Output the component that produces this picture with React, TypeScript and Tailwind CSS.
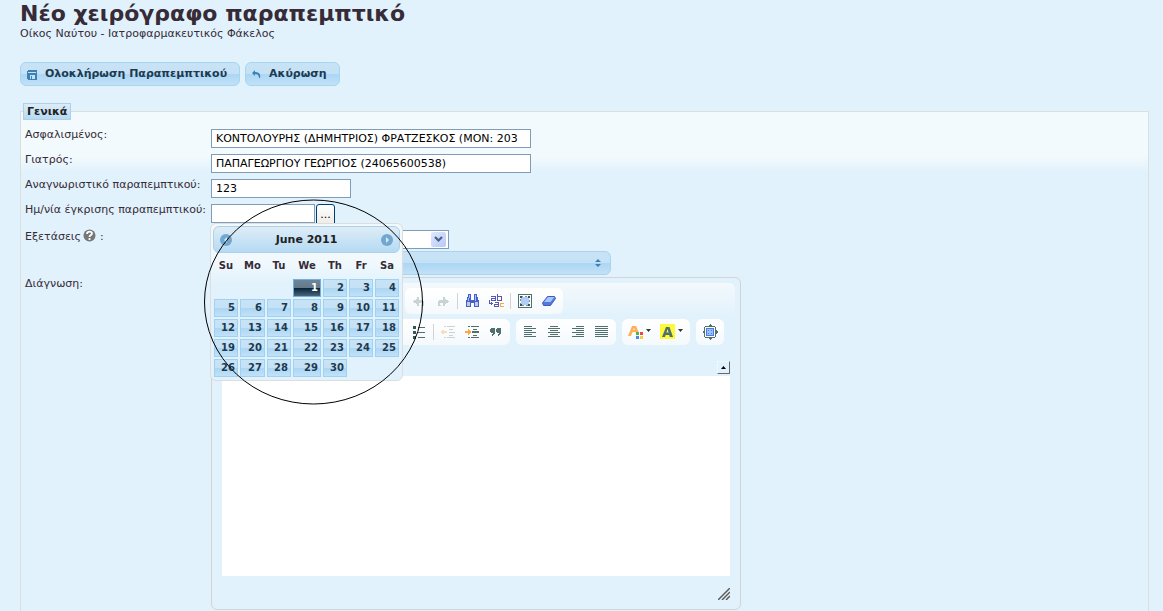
import React from 'react';

type ToolProps = { label: string; children: React.ReactNode; wide?: boolean };

const weekDays = ['Su', 'Mo', 'Tu', 'We', 'Th', 'Fr', 'Sa'];
const weeks = [
  [0, 0, 0, 1, 2, 3, 4],
  [5, 6, 7, 8, 9, 10, 11],
  [12, 13, 14, 15, 16, 17, 18],
  [19, 20, 21, 22, 23, 24, 25],
  [26, 27, 28, 29, 30, 0, 0],
];

const glossyFill = 'bg-[linear-gradient(to_bottom,#c8e3f6_0%,#c5e1f5_50%,#abd6f4_51%,#c2e1f7_100%)]';
const button = `flex h-6 items-center rounded-md border border-[#a6d5f3] font-bold text-[#1d3a50] ${glossyFill}`;
const field = 'h-[19px] border border-[#7f9db9] bg-white px-1 text-[11px] text-black outline-none';

function Tool({ label, children, wide }: ToolProps) {
  return (
    <button type="button" aria-label={label} className={wide ? 'flex h-6 w-8 items-center justify-center' : 'flex h-6 w-6 items-center justify-center'}>
      {children}
    </button>
  );
}

function Separator() {
  return <span className="mx-0.5 h-4 w-px bg-[#d3d3d3]" />;
}

function ToolGroup({ children, className = '' }: { children?: React.ReactNode; className?: string }) {
  return (
    <div className={`flex h-[26px] shrink-0 items-center rounded-md bg-linear-to-b from-white to-[#f4f9fc] px-0.5 ${className}`}>
      {children}
    </div>
  );
}

function Icon({ children, size = 16 }: { children: React.ReactNode; size?: number }) {
  return (
    <svg width={size} height={size} viewBox={`0 0 ${size} ${size}`} fill="none" shapeRendering="crispEdges" aria-hidden="true">
      {children}
    </svg>
  );
}

function AlignIcon({ rows }: { rows: [number, number][] }) {
  return (
    <Icon>
      {rows.map(([x, w], i) => (
        <rect key={i} x={x} y={2 + i * 2} width={w} height="1" fill="#4f706d" />
      ))}
    </Icon>
  );
}

function Calendar() {
  return (
    <div className="absolute top-[19px] -left-px z-10 w-[193px] rounded-md border border-[#dddddd] bg-[linear-gradient(to_bottom,#f2f9fd_0,#f2f9fd_36px,#e1f2fc_60px)] p-0.5">
      <div className="flex h-[27px] items-center justify-between rounded-md border border-[#aed0ea] bg-linear-to-b from-[#deedf7] to-[#b5daf3] px-[5px]">
        <button type="button" aria-label="Prev">
          <Icon size={14}>
            <circle cx="7" cy="7" r="6" fill="#72a7cf" shapeRendering="auto" />
            <path d="M8 4v6L5 7z" fill="#d8ebf8" shapeRendering="auto" />
          </Icon>
        </button>
        <span className="pt-0.5 text-[11px] font-bold text-[#222222]">June 2011</span>
        <button type="button" aria-label="Next">
          <Icon size={14}>
            <circle cx="7" cy="7" r="6" fill="#72a7cf" shapeRendering="auto" />
            <path d="M6 4v6l3-3z" fill="#d8ebf8" shapeRendering="auto" />
          </Icon>
        </button>
      </div>
      <table className="w-full table-fixed border-separate border-spacing-0 text-[10px] font-bold">
        <colgroup>
          <col className="w-[26px]" />
          <col className="w-[27px]" />
          <col className="w-[26px]" />
          <col className="w-[30px]" />
          <col className="w-[26px]" />
          <col className="w-[26px]" />
          <col className="w-[26px]" />
        </colgroup>
        <thead>
          <tr className="h-[25px] text-[#362b36]">
            {weekDays.map((day) => (
              <th key={day} className="p-0 text-center">{day}</th>
            ))}
          </tr>
        </thead>
        <tbody>
          {weeks.map((week, i) => (
            <tr key={i}>
              {week.map((day, j) => (
                <td key={j} className="h-5 p-px">
                  {day > 0 && (
                    <a
                      href="#"
                      className={
                        day === 1
                          ? 'block h-[18px] border border-[#6fb0dd] bg-[linear-gradient(to_bottom,#6d8597_0%,#627a8c_48%,#05233a_50%,#4a6478_100%)] pr-0.5 text-right leading-4 text-white'
                          : `block h-[18px] border border-[#9fd1f2] pr-0.5 text-right leading-4 text-[#1d3a50] ${glossyFill}`
                      }
                    >
                      {day}
                    </a>
                  )}
                </td>
              ))}
            </tr>
          ))}
        </tbody>
      </table>
    </div>
  );
}

function Editor() {
  return (
    <div className="w-[530px] rounded-md border border-[#d3d3d3] p-[5px]">
      <div className="flex h-[86px] flex-col gap-[5px] rounded-md bg-[linear-gradient(to_bottom,#f4f9fc_0,#e1f2fc_34px)] pt-[5px]">
        <div className="flex gap-1.5">
          <ToolGroup className="w-[182px]" />
          <ToolGroup>
            <Tool label="Undo">
              <Icon>
                <path d="M2 8h1v1H2zM3 7h2v3H3zM5 6h2v5H5zM6 4h2v9H6zM8 7h4v3H8zM11 8h2v5h-2zM10 12h2v1h-2z" fill="#c9d3d4" />
              </Icon>
            </Tool>
            <Tool label="Redo">
              <Icon>
                <path d="M14 8h-1v1h1zM11 7h2v3h-2zM9 6h2v5H9zM8 4h2v9H8zM4 7h4v3H4zM3 8h2v5H3zM4 12h2v1H4z" fill="#c9d3d4" />
              </Icon>
            </Tool>
            <Separator />
            <Tool label="Find">
              <Icon>
                <path d="M4 1h3v4H4zM10 1h3v4h-3zM3 4h4v3H3zM10 4h4v3h-4zM2 7h5v7H2zM10 7h5v7h-5zM7 7h3v3H7z" fill="#4560c8" />
                <path d="M5 2h1v3H5zM11 2h1v3h-1zM4 5h1v3H4zM11 5h1v3h-1z" fill="#9cc4ff" />
                <path d="M3 9h3v4H3zM11 9h3v4h-3z" fill="#c3cbd8" />
              </Icon>
            </Tool>
            <Tool label="Replace">
              <Icon>
                <path d="M3 3.500h4v4H3.500v-2H7M9.500 1v6.500H13v-4H9.500" stroke="#5756b5" />
                <path d="M1 6.500v3.500h3M6.500 9.500h4v4h-4v-2h4" stroke="#5756b5" />
                <path d="M3 8v5l2-2.500z" fill="#5756b5" />
                <path d="M16 10h-4v3.500h4" stroke="#ffa63f" />
              </Icon>
            </Tool>
            <Separator />
            <Tool label="Select all">
              <Icon>
                <path d="M1.500 1.500h13v13h-13z" stroke="#4f706d" fill="white" />
                <path d="M4 4h8v8H4z" fill="#b3cdf5" />
                <path d="M3.500 3.500h9v9h-9z" stroke="#7891a5" strokeDasharray="2 2" />
                <path d="M3 3h2v2H3zM11 3h2v2h-2zM3 11h2v2H3zM11 11h2v2h-2z" fill="#375653" />
              </Icon>
            </Tool>
            <Tool label="Remove format">
              <svg width="16" height="16" viewBox="0 0 16 16" aria-hidden="true">
                <path d="M6.500 3.500h7l1 2-5 7H2.500l-1-2.500z" fill="#4f7be0" stroke="#4a57b8" />
                <path d="M7 4h6.500L9.500 9H3z" fill="#a6c6ff" />
              </svg>
            </Tool>
          </ToolGroup>
        </div>
        <div className="flex gap-1.5">
          <ToolGroup className="w-[293px] justify-end">
            <Tool label="Bulleted list">
              <Icon><path d="M2 2h3v3H2zM2 7h3v3H2zM2 12h3v3H2z" fill="#375653" /><path d="M7 3.500h7M7 8.500h7M7 13.500h7" stroke="#4f706d" /></Icon>
            </Tool>
            <Separator />
            <Tool label="Decrease indent">
              <Icon>
                <path d="M4 2h2v1H4zM7 2h8v1H7zM9 5h4v1H9zM9 8h6v1H9zM9 11h4v1H9zM4 13h2v1H4zM7 13h8v1H7z" fill="#c9d3d4" />
                <path d="M1 7h1v2H1zM2 6h2v4H2zM4 7h3v2H4z" fill="#fbdcb8" />
              </Icon>
            </Tool>
            <Tool label="Increase indent">
              <Icon>
                <path d="M4 2h2v1H4zM7 2h8v1H7zM9 5h4v1H9zM8 7h7v2H8zM9 11h4v1H9zM4 13h2v1H4zM7 13h8v1H7z" fill="#4f706d" />
                <path d="M1 7h4v2H1zM4 5h1v6H4zM5 6h1v4H5zM6 7h1v2H6z" fill="#ffa63f" />
              </Icon>
            </Tool>
            <Tool label="Block quote">
              <Icon><path d="M3 4h4v5l-3 3v-2l1-1H3l-1-1V5zM9 4h4v5l-3 3v-2l1-1H9L8 8V5z" fill="#4f706d" /></Icon>
            </Tool>
          </ToolGroup>
          <ToolGroup>
            <Tool label="Align left"><AlignIcon rows={[[2, 8], [2, 12], [2, 8], [2, 12], [2, 8], [2, 12]]} /></Tool>
            <Tool label="Center"><AlignIcon rows={[[4, 8], [2, 12], [4, 8], [2, 12], [4, 8], [2, 12]]} /></Tool>
            <Tool label="Align right"><AlignIcon rows={[[6, 8], [2, 12], [6, 8], [2, 12], [6, 8], [2, 12]]} /></Tool>
            <Tool label="Justify"><AlignIcon rows={[[1, 13], [1, 13], [1, 13], [1, 13], [1, 13], [1, 13]]} /></Tool>
          </ToolGroup>
          <ToolGroup>
            <Tool label="Text color" wide>
              <svg width="24" height="16" viewBox="0 0 24 16" aria-hidden="true">
                <path d="M0 12L4 2h4l3 7H8l-.5-1h-3L3 12zM5.200 6h1.600L6 4z" fill="#ffb056" fillRule="evenodd" />
                <path d="M8 8h3v3H8z" fill="#4db748" /><path d="M12 8h3v3h-3z" fill="#f0483e" />
                <path d="M8 12h3v3H8z" fill="#4a87f0" /><path d="M12 12h3v3h-3z" fill="#f6cf4a" />
                <path d="M18 5h5l-2.500 3z" fill="#333333" />
              </svg>
            </Tool>
            <Tool label="Background color" wide>
              <svg width="24" height="16" viewBox="0 0 24 16" aria-hidden="true">
                <path d="M0 0h15v15H0z" fill="#fdf93d" />
                <path d="M2 13L6 3h3.500L13 13h-3.200l-.6-2H5.600L5 13zM6.400 8.500h2.200L7.500 5z" fill="#4f706d" fillRule="evenodd" />
                <path d="M18 5h5l-2.500 3z" fill="#333333" />
              </svg>
            </Tool>
          </ToolGroup>
          <ToolGroup>
            <Tool label="Maximize">
              <Icon>
                <path d="M3.500 2.500h9l1 1v9l-1 1h-9l-1-1v-9z" stroke="#4f706d" fill="white" />
                <path d="M4 4h8v8H4z" fill="#4a7be0" />
                <path d="M5 5h6v6H5z" fill="#9cc0ff" />
                <path d="M6 6h1v1H6zM9 6h1v1H9zM6 9h1v1H6zM9 9h1v1H9z" fill="#4a7be0" />
                <path d="M8 0l2 2H6zM8 16l2-2H6zM0 8l2-2v4zM16 8l-2-2v4z" fill="#4f706d" />
              </Icon>
            </Tool>
          </ToolGroup>
        </div>
      </div>
      <div className="flex h-[7px] justify-end pr-[5px]">
        <button type="button" aria-label="Collapse toolbar" className="-mt-2 flex h-[13px] w-[13px] items-center justify-center border-t border-r border-b border-l border-t-[#f1f7fb] border-r-[#696969] border-b-[#696969] border-l-[#f1f7fb]">
          <svg width="5" height="3" viewBox="0 0 5 3" aria-hidden="true"><path d="M2.500 0L5 3H0z" fill="black" /></svg>
        </button>
      </div>
      <textarea aria-label="Διάγνωση" className="mx-[5px] block h-[200px] w-[508px] resize-none bg-white outline-none" />
      <div className="flex h-7 items-end justify-end pr-[5px] pb-1">
        <svg width="12" height="12" viewBox="0 0 12 12" aria-hidden="true">
          <path d="M0 12L12 0M4 12l8-8M8 12l4-4" stroke="#5c5c5c" strokeWidth="1.500" />
        </svg>
      </div>
    </div>
  );
}

export default function App() {
  return (
    <main className="h-screen overflow-hidden bg-[#e1f2fc] pr-[14px] pl-5 font-['DejaVu_Sans','Noto_Sans',sans-serif] text-[11px] text-[#362b36]">
      <h1 className="text-[22px] leading-7 font-bold">Νέο χειρόγραφο παραπεμπτικό</h1>
      <p className="leading-3">Οίκος Ναύτου - Ιατροφαρμακευτικός Φάκελος</p>

      <div className="mt-[22px] flex gap-[5px]">
        <button type="button" className={`${button} gap-2 pt-px pr-3 pl-1.5`}>
          <Icon size={10}>
            <path d="M1 0h8l1 1v8l-1 1H1L0 9V1z" fill="#3d80b3" />
            <path d="M1 2h8v1H1zM3 5h5v4H3z" fill="#c5e1f5" />
            <path d="M4 6h1v3H4z" fill="#3d80b3" />
          </Icon>
          Ολοκλήρωση Παραπεμπτικού
        </button>
        <button type="button" className={`${button} gap-2 pt-px pr-3 pl-1.5`}>
          <svg width="9" height="9" viewBox="0 0 9 9" aria-hidden="true">
            <path d="M0 3l3-3v2c4 0 6 2 5 6H7c0-2-1-4-4-4v2z" fill="#3d80b3" />
          </svg>
          Ακύρωση
        </button>
      </div>

      <fieldset className="mt-[17px] h-[600px] border border-[#dddddd] bg-[linear-gradient(to_bottom,#f2fafd_0,#f2fafd_44px,#e1f2fc_60px)] px-1">
        <legend className="-ml-0.5 flex h-[17px] items-center border border-[#aed0ea] bg-linear-to-b from-[#deedf7] to-[#b5daf3] px-[3px] pt-0.5 font-bold text-[#222222]">
          Γενικά
        </legend>
        <div className="grid grid-cols-[186px_1fr] pt-[9px]">
          <label htmlFor="insured" className="h-[25px] leading-3">Ασφαλισμένος:</label>
          <div><input id="insured" className={`${field} block w-[320px]`} defaultValue="ΚΟΝΤΟΛΟΥΡΗΣ (ΔΗΜΗΤΡΙΟΣ) ΦΡΑΤΖΕΣΚΟΣ (ΜΟΝ: 203" /></div>
          <label htmlFor="doctor" className="h-[25px] leading-3">Γιατρός:</label>
          <div><input id="doctor" className={`${field} block w-[320px]`} defaultValue="ΠΑΠΑΓΕΩΡΓΙΟΥ ΓΕΩΡΓΙΟΣ (24065600538)" /></div>
          <label htmlFor="refid" className="h-[25px] leading-3">Αναγνωριστικό παραπεμπτικού:</label>
          <div><input id="refid" className={`${field} block w-[140px]`} defaultValue="123" /></div>
          <label htmlFor="approved" className="h-[25px] leading-3 whitespace-nowrap">Ημ/νία έγκρισης παραπεμπτικού:</label>
          <div className="relative flex gap-px">
            <input id="approved" className={`${field} w-[104px]`} />
            <button type="button" className="h-[22px] w-[19px] rounded-[3px] border border-[#003c74] bg-linear-to-b from-white to-[#ecebe5] text-[11px] text-black">...</button>
            <Calendar />
            {/* hand-drawn ring around the date picker */}
            <svg className="pointer-events-none absolute -top-[5px] -left-[7px] z-20" width="220" height="206" viewBox="0 0 220 206" fill="none" aria-hidden="true">
              <ellipse cx="109.500" cy="103" rx="109" ry="102" stroke="black" />
            </svg>
          </div>
          <div className="flex h-12 items-start gap-0.5">
            <label htmlFor="exams" className="pt-0.5 leading-3">Εξετάσεις</label>
            <svg width="13" height="13" viewBox="0 0 13 13" aria-hidden="true">
              <circle cx="6.500" cy="6.500" r="6" fill="#777777" />
              <path d="M4 5c0-3 5-3 5-.5C9 6 6.500 6 6.500 8M6.500 9v2" stroke="white" strokeWidth="1.800" fill="none" />
            </svg>
            <span className="pt-0.5 pl-0.5 leading-3">:</span>
          </div>
          <div className="h-12 pt-px">
            <div className="relative w-[238px]">
              <select id="exams" className={`${field} block w-full appearance-none`} />
              <span className="pointer-events-none absolute top-0.5 right-[3px] flex h-[15px] w-[15px] items-center justify-center rounded-xs bg-linear-to-br from-[#dfe8ff] to-[#b5c9f8]">
                <svg width="9" height="7" viewBox="0 0 9 7" fill="none" aria-hidden="true"><path d="M1 1l3.500 3.500L8 1" stroke="#4d6185" strokeWidth="2.200" /></svg>
              </span>
            </div>
            <button type="button" aria-label="Επιλογή" className={`${button} mt-0.5 w-[400px] justify-end pr-[9px]`}>
              <svg width="6" height="8" viewBox="0 0 6 8" aria-hidden="true"><path d="M3 0l3 3H0zM3 8L0 5h6z" fill="#3d80b3" /></svg>
            </button>
          </div>
          <span className="pt-px leading-3">Διάγνωση:</span>
          <Editor />
        </div>
      </fieldset>
    </main>
  );
}
